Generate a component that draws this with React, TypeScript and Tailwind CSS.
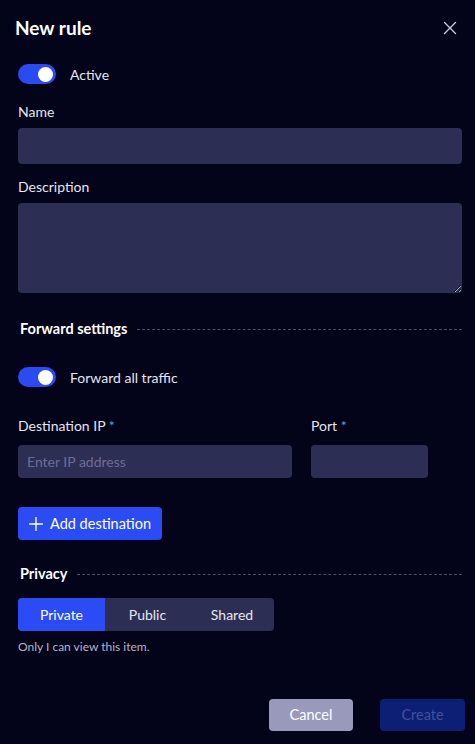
import React, { useState } from "react";
import { Plus, X } from "lucide-react";

const Toggle = ({ on }: { on: boolean }) => (
  <div
    className={`flex h-5 w-[38px] items-center rounded-full px-[3px] ${
      on ? "justify-end bg-[#2b4bf2]" : "justify-start bg-[#3a3b5e]"
    }`}
  >
    <span className="h-[15px] w-[15px] rounded-full bg-white" />
  </div>
);

const SectionTitle = ({ title }: { title: string }) => (
  <div className="flex h-5 items-center gap-[10px] pl-[2px]">
    <span className="text-[14.5px] font-bold text-white">{title}</span>
    <div className="flex-1 border-t border-dashed border-[#4b4c6c]" />
  </div>
);

const App = () => {
  const [privacy, setPrivacy] = useState("Private");
  const options = [
    { label: "Private", w: "w-[87px]" },
    { label: "Public", w: "w-[85px]" },
    { label: "Shared", w: "w-[84px]" },
  ];

  return (
    <div
      className="flex h-[744px] w-[475px] flex-col bg-[#03031a] text-[#e6e6f0]"
      style={{ fontFamily: "Lato, 'Open Sans', sans-serif" }}
    >
      {/* Header */}
      <div className="flex h-14 items-center justify-between pl-[15px] pr-[14px]">
        <h2 className="text-[19px] font-bold text-white">New rule</h2>
        <button className="text-[#c8c8dc]">
          <X size={22} strokeWidth={1.5} />
        </button>
      </div>

      {/* Body */}
      <div className="flex flex-col pl-[18px] pr-[13px]">
        <div className="mt-2 flex h-5 items-center gap-[14px]">
          <Toggle on />
          <span className="text-[14px]">Active</span>
        </div>

        <label className="mt-[18px] h-5 text-[14px] leading-5">Name</label>
        <input className="mt-[6px] h-9 w-full rounded-[4px] bg-[#2d2e53] px-3 text-[14px] outline-none" />

        <label className="mt-[13px] h-5 text-[14px] leading-5">Description</label>
        <textarea className="mt-[6px] h-[90px] w-full rounded-[4px] bg-[#2d2e53] px-3 py-2 text-[14px] outline-none" />

        <div className="mt-[26px]">
          <SectionTitle title="Forward settings" />
        </div>

        <div className="mt-[28px] flex h-5 items-center gap-[14px]">
          <Toggle on />
          <span className="text-[14px]">Forward all traffic</span>
        </div>

        <div className="mt-[29px] flex gap-[19px]">
          <div className="flex w-[274px] flex-col">
            <label className="h-5 text-[14px] leading-5">
              Destination IP <span className="text-[#4aa2e0]">*</span>
            </label>
            <input
              placeholder="Enter IP address"
              className="mt-[9px] h-[33px] w-full rounded-[4px] bg-[#2d2e53] px-[9px] text-[14px] outline-none placeholder:text-[#6c6d96]"
            />
          </div>
          <div className="flex w-[117px] flex-col">
            <label className="h-5 text-[14px] leading-5">
              Port <span className="text-[#4aa2e0]">*</span>
            </label>
            <input className="mt-[9px] h-[33px] w-full rounded-[4px] bg-[#2d2e53] px-[9px] text-[14px] outline-none" />
          </div>
        </div>

        <button className="mt-[29px] flex h-[33px] w-[144px] items-center gap-[3px] rounded-[4px] bg-[#2b4cf5] pl-[7px] text-[14.5px] text-white">
          <Plus size={22} strokeWidth={1.5} />
          Add destination
        </button>

        <div className="mt-[24px]">
          <SectionTitle title="Privacy" />
        </div>

        <div className="mt-[14px] flex h-[33px] w-[256px] overflow-hidden rounded-[4px] bg-[#2d2e53]">
          {options.map((o) => (
            <button
              key={o.label}
              onClick={() => setPrivacy(o.label)}
              className={`${o.w} text-[14px] ${
                privacy === o.label ? "bg-[#2b4cf5] text-white" : "text-[#e6e6f0]"
              }`}
            >
              {o.label}
            </button>
          ))}
        </div>
        <p className="mt-[8px] text-[12px] leading-4 text-[#b4b4c8]">Only I can view this item.</p>
      </div>

      {/* Footer */}
      <div className="mt-auto mb-[13px] flex justify-end gap-[27px] pr-[10px]">
        <button className="h-8 w-[84px] rounded-[4px] bg-[#9899bb] text-[14.5px] text-white">
          Cancel
        </button>
        <button
          disabled
          className="h-8 w-[85px] rounded-[4px] bg-[#0d1f74] text-[14.5px] text-[#43519a]"
        >
          Create
        </button>
      </div>
    </div>
  );
};

export default App;
